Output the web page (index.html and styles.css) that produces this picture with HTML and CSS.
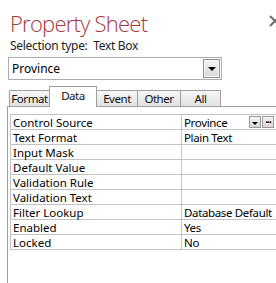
FILE: index.html
```html
<!DOCTYPE html>
<html lang="en">
<head>
    <meta charset="UTF-8">
    <title>Property Sheet</title>
    <link rel="stylesheet" href="styles.css">
</head>
<body>
    <div class="sheet">
        <div class="sheet-head">
            <h1 class="sheet-title">Property Sheet</h1>
            <svg class="close-btn" width="12" height="12" viewBox="0 0 12 12">
                <path d="M1 1 L11 11 M11 1 L1 11" stroke="#6d6d6d" stroke-width="2" fill="none"/>
            </svg>
        </div>
        <div class="selection">Selection type:&nbsp; Text Box</div>

        <div class="combo">
            <span class="combo-text">Province</span>
            <span class="combo-btn"><span class="arrow"></span></span>
        </div>

        <div class="tabs">
            <div class="tab tab-format">Format</div>
            <div class="tab tab-data active">Data</div>
            <div class="tab tab-event">Event</div>
            <div class="tab tab-other">Other</div>
            <div class="tab tab-all">All</div>
        </div>

        <div class="panel">
            <table class="props">
                <tr>
                    <td class="name">Control Source</td>
                    <td class="value">
                        <div class="value-box">
                            <span>Province</span>
                            <span class="cell-btns">
                                <span class="cell-btn"><span class="mini-arrow"></span></span>
                                <span class="cell-btn dots">&middot;&middot;&middot;</span>
                            </span>
                        </div>
                    </td>
                </tr>
                <tr><td class="name">Text Format</td><td class="value">Plain Text</td></tr>
                <tr><td class="name">Input Mask</td><td class="value"></td></tr>
                <tr><td class="name">Default Value</td><td class="value"></td></tr>
                <tr><td class="name">Validation Rule</td><td class="value"></td></tr>
                <tr><td class="name">Validation Text</td><td class="value"></td></tr>
                <tr><td class="name">Filter Lookup</td><td class="value">Database Default</td></tr>
                <tr><td class="name">Enabled</td><td class="value">Yes</td></tr>
                <tr><td class="name">Locked</td><td class="value">No</td></tr>
            </table>
        </div>
    </div>
</body>
</html>
```

FILE: styles.css
```css
* {
    margin: 0;
    padding: 0;
    box-sizing: border-box;
}

body {
    background: #fff;
    color: #000;
    font-family: 'Noto Sans', 'DejaVu Sans', sans-serif;
    font-size: 12px;
    width: 276px;
    height: 283px;
    overflow: hidden;
}

.sheet {
    width: 276px;
    height: 283px;
    overflow: hidden;
}

.sheet-head {
    position: relative;
    height: 37px;
}

.sheet-title {
    padding: 9px 0 0 10px;
    font-family: 'Open Sans', sans-serif;
    font-weight: 300;
    font-size: 22px;
    letter-spacing: -0.75px;
    line-height: 28px;
    color: #a4373a;
    white-space: nowrap;
}

.close-btn {
    position: absolute;
    left: 269px;
    top: 15px;
}

.selection {
    padding-left: 10px;
    line-height: 17px;
    letter-spacing: -0.3px;
    color: #222;
}

/* выпадающий список */
.combo {
    margin: 3px 0 0 8px;
    width: 214px;
    height: 23px;
    border: 1px solid #abadb3;
    display: flex;
    align-items: center;
    justify-content: space-between;
    padding-left: 3px;
}

.combo-btn {
    width: 17px;
    height: 19px;
    margin-right: 1px;
    border: 1px solid #8e8f8f;
    box-shadow: inset 0 0 0 1px #f7f7f7;
    background: linear-gradient(#f2f2f2, #d9d9d9);
    display: flex;
    align-items: center;
    justify-content: center;
}

.arrow {
    width: 0;
    height: 0;
    border-left: 4px solid transparent;
    border-right: 4px solid transparent;
    border-top: 4px solid #000;
    margin-top: 1px;
}

/* вкладки */
.tabs {
    display: flex;
    align-items: flex-end;
    padding-left: 9px;
    margin-top: 6px;
    height: 20px;
    font-size: 11.5px;
    letter-spacing: -0.45px;
}

.tab {
    height: 16px;
    border: 1px solid #a0a0a0;
    border-bottom: none;
    margin-left: -1px;
    background: linear-gradient(#f6f6f6, #e2e2e2);
    text-align: center;
    line-height: 15px;
    color: #111;
    white-space: nowrap;
}

.tab:first-child {
    margin-left: 0;
}

.tab.active {
    height: 21px;
    background: #fff;
    margin-bottom: -1px;
    line-height: 15px;
    padding-top: 1px;
    position: relative;
    z-index: 1;
}

.tab-format { width: 41px; }
.tab-data { width: 48px; }
.tab-event { width: 42px; }
.tab-other { width: 44px; }
.tab-all { width: 41px; }

/* панель свойств */
.panel {
    margin-left: 7px;
    border-top: 1px solid #a0a0a0;
    border-left: 1px solid #a0a0a0;
    height: 200px;
    padding: 7px 0 0 2px;
}

.props {
    border-collapse: collapse;
    width: 290px;
    font-size: 11.5px;
}

.props td {
    height: 15px;
    border: 1px solid #c3c3c3;
    padding: 0 0 0 2px;
    line-height: 13px;
    white-space: nowrap;
    vertical-align: middle;
}

.props .name {
    width: 171px;
}

.props .value {
    letter-spacing: -0.35px;
}

.value-box {
    width: 90px;
    display: flex;
    justify-content: space-between;
    align-items: center;
}

.cell-btns {
    display: flex;
    gap: 1px;
}

.cell-btn {
    width: 12px;
    height: 12px;
    border: 1px solid #9a9a9a;
    background: linear-gradient(#f4f4f4, #d8d8d8);
    display: flex;
    align-items: flex-end;
    justify-content: center;
}

.mini-arrow {
    width: 0;
    height: 0;
    border-left: 3px solid transparent;
    border-right: 3px solid transparent;
    border-top: 3px solid #000;
    margin-bottom: 2px;
}

.cell-btn.dots {
    font-size: 10px;
    font-weight: bold;
    line-height: 8px;
    letter-spacing: -1px;
    align-items: center;
}
```
